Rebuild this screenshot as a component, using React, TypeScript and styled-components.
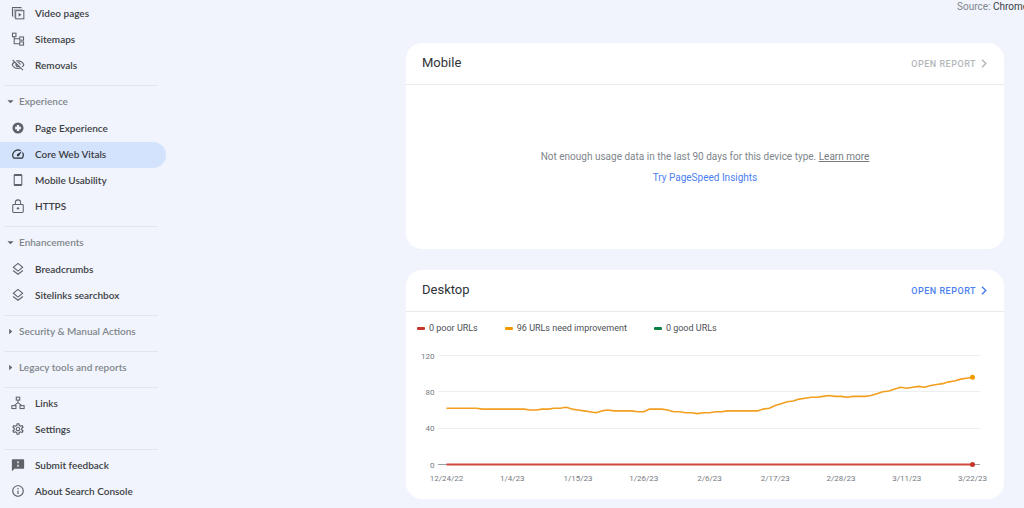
import React from "react";
import styled, { createGlobalStyle } from "styled-components";
import {
  MdOutlineVisibilityOff,
  MdOutlineSpeed,
  MdOutlineSettings,
  MdInfoOutline,
} from "react-icons/md";

const GlobalStyle = createGlobalStyle`
  * { box-sizing: border-box; }
  body {
    margin: 0;
    background: #f1f4fc;
    color: #3c4043;
    font-family: Roboto, "Liberation Sans", sans-serif;
    font-size: 10px;
    overflow-x: hidden;
  }
`;

const Page = styled.div`
  display: flex;
  align-items: flex-start;
`;

const Sidebar = styled.nav`
  flex: 0 0 166px;
  padding-top: 1px;
  font-family: Lato, "Liberation Sans", sans-serif;
  font-weight: 600;
`;

const Section = styled.section`
  padding-bottom: 6px;
`;

const Divider = styled.hr`
  height: 1px;
  margin: 0 8px 3px 4px;
  border: 0;
  background: #e3e5ea;
`;

const NavList = styled.ul<{ $indented?: boolean }>`
  margin: 0;
  padding: ${(p) => (p.$indented ? "1px 0 0" : "0")};
  list-style: none;
`;

const NavLink = styled.a<{ $active?: boolean }>`
  display: flex;
  align-items: center;
  gap: 10px;
  height: 26px;
  padding: 0 0 2px 11px;
  border-radius: 0 13px 13px 0;
  background: ${(p) => (p.$active ? "#d3e2fd" : "transparent")};
  color: #3c4043;
  text-decoration: none;
  white-space: nowrap;

  svg {
    flex: none;
    width: 14px;
    height: 14px;
    color: ${(p) => (p.$active ? "#2b2f33" : "#5f6368")};
  }
`;

const GroupToggle = styled.button`
  display: flex;
  align-items: center;
  gap: 5px;
  width: 100%;
  height: 26px;
  padding: 0 0 2px 7px;
  border: 0;
  background: none;
  color: #80868b;
  font: inherit;
  white-space: nowrap;

  svg {
    width: 7px;
    height: 7px;
    color: #5f6368;
  }
`;

const Main = styled.main`
  flex: 1;
  min-width: 0;
  padding: 0 20px 10px 240px;
`;

const SourceBar = styled.div`
  display: flex;
  justify-content: flex-end;
  margin-right: -20px;
  height: 43px;
`;

const Source = styled.p`
  width: 67px;
  margin: 0;
  overflow: hidden;
  line-height: 14px;
  white-space: nowrap;
  color: #80868b;

  b {
    font-weight: 400;
    color: #3c4043;
  }
`;

const Card = styled.section`
  margin-bottom: 21px;
  border-radius: 16px;
  background: #fff;
  overflow: hidden;

  &:last-child { margin-bottom: 0; }
`;

const CardHeader = styled.header`
  display: flex;
  align-items: center;
  justify-content: space-between;
  height: 42px;
  padding: 0 16px;
  border-bottom: 1px solid #e8eaed;
`;

const CardTitle = styled.h2`
  margin: 0 0 2px;
  font-size: 13px;
  font-weight: 400;
  color: #303336;
`;

const ReportButton = styled.button`
  display: flex;
  align-items: center;
  gap: 5px;
  padding: 0;
  border: 0;
  background: none;
  color: #4d7ff0;
  font: 500 9px Roboto, sans-serif;
  letter-spacing: 0.5px;

  &:disabled { color: #b4b7ba; }

  svg {
    width: 7px;
    height: 9px;
  }
`;

const EmptyState = styled.div`
  display: flex;
  flex-direction: column;
  align-items: center;
  gap: 7px;
  padding: 65px 16px 64px;
  line-height: 14px;
  color: #80868b;

  p { margin: 0; }
  p a { color: #757a7f; }
`;

const InsightsLink = styled.a`
  color: #4d7ff0;
  text-decoration: none;
`;

const Legend = styled.ul`
  display: flex;
  gap: 27px;
  margin: 0;
  padding: 9px 11px 10px;
  list-style: none;
  line-height: 14px;
  color: #4d5156;
  font-size: 9px;
`;

const LegendItem = styled.li<{ $color: string }>`
  display: flex;
  align-items: center;
  gap: 4px;

  &::before {
    content: "";
    width: 8px;
    height: 3px;
    border-radius: 1px;
    background: ${(p) => p.$color};
  }
`;

const ChartSvg = styled.svg`
  display: block;
  width: 100%;
  height: auto;

  text {
    font-family: Roboto, sans-serif;
    font-size: 8px;
    fill: #757a7f;
  }
`;

const VideoPagesIcon = () => (
  <svg viewBox="0 0 24 24" fill="none" stroke="currentColor" strokeWidth="1.8">
    <path d="M2.5 18V2.500H18" />
    <path d="M5.500 20.500V5.500H20" strokeWidth="1" />
    <rect x="8" y="8" width="14" height="14" />
    <path d="M13 11.500v7l5-3.500z" fill="currentColor" stroke="none" />
  </svg>
);

const SitemapIcon = () => (
  <svg viewBox="0 0 24 24" fill="none" stroke="currentColor" strokeWidth="1.8">
    <rect x="2.500" y="2" width="6" height="6" />
    <rect x="15" y="8.500" width="6.500" height="5.500" />
    <rect x="15" y="17" width="6.500" height="5.500" />
    <path d="M5.500 8v12H15M5.500 11.500H15" />
  </svg>
);

const PageExperienceIcon = () => (
  <svg viewBox="0 0 24 24" fill="currentColor">
    <path
      fillRule="evenodd"
      d="M12 2.500a9.500 9.500 0 1 0 0 19 9.500 9.500 0 0 0 0-19zM10 7h4V10h3v4H14v3h-4V14H7v-4h3z"
    />
  </svg>
);

const PhoneIcon = () => (
  <svg viewBox="0 0 24 24" fill="none" stroke="currentColor">
    <rect x="5.500" y="2.500" width="13" height="19" rx="1.500" strokeWidth="1.800" />
    <path d="M5.500 4h13M5.500 20h13" strokeWidth="2" />
  </svg>
);

const LockIcon = () => (
  <svg viewBox="0 0 24 24" fill="none" stroke="currentColor" strokeWidth="1.800">
    <rect x="3" y="9.500" width="18" height="13.500" rx="1.500" />
    <path d="M7.500 9.500V6a4.500 4.500 0 0 1 9 0V9.500" />
    <circle cx="12" cy="16" r="2" fill="currentColor" stroke="none" />
  </svg>
);

const LayersIcon = () => (
  <svg viewBox="0 0 24 24" fill="none" stroke="currentColor" strokeWidth="1.800">
    <path d="M12 2.500l8 6.500-8 6.500L4 9z" />
    <path d="M3.500 14.500L12 21l8.500-6.500" />
  </svg>
);

const LinksIcon = () => (
  <svg viewBox="0 0 24 24" fill="none" stroke="currentColor" strokeWidth="1.800">
    <rect x="9" y="2" width="6" height="5" />
    <rect x="1.500" y="16.500" width="7" height="5" />
    <rect x="15.500" y="16.500" width="7" height="5" />
    <path d="M12 7v5M5.500 16.500L12 11.500l6.500 5" />
  </svg>
);

const FeedbackIcon = () => (
  <svg viewBox="0 0 24 24" fill="currentColor">
    <path
      fillRule="evenodd"
      d="M3 2h18a1.500 1.500 0 0 1 1.500 1.500V17a1.500 1.500 0 0 1-1.500 1.500H6L1.500 22.500V3.500A1.500 1.500 0 0 1 3 2zM10.800 5.500V9h2.400V5.500zM10.800 11.500V15h2.400v-3.500z"
    />
  </svg>
);

const Caret = ({ open }: { open: boolean }) => (
  <svg viewBox="0 0 8 8" fill="currentColor" aria-hidden="true">
    <path d={open ? "M0.500 2.500h7L4 6z" : "M2.500 0.800v6.400L6 4z"} />
  </svg>
);

const Chevron = () => (
  <svg viewBox="0 0 7 9" fill="none" stroke="currentColor" strokeWidth="1.500" aria-hidden="true">
    <path d="M1 0.800L4.800 4.500 1 8.200" />
  </svg>
);

type Item = { label: string; icon: React.ReactNode; active?: boolean };
type Group = { title?: string; items?: Item[] };

const groups: Group[] = [
  {
    items: [
      { label: "Video pages", icon: <VideoPagesIcon /> },
      { label: "Sitemaps", icon: <SitemapIcon /> },
      { label: "Removals", icon: <MdOutlineVisibilityOff /> },
    ],
  },
  {
    title: "Experience",
    items: [
      { label: "Page Experience", icon: <PageExperienceIcon /> },
      { label: "Core Web Vitals", icon: <MdOutlineSpeed />, active: true },
      { label: "Mobile Usability", icon: <PhoneIcon /> },
      { label: "HTTPS", icon: <LockIcon /> },
    ],
  },
  {
    title: "Enhancements",
    items: [
      { label: "Breadcrumbs", icon: <LayersIcon /> },
      { label: "Sitelinks searchbox", icon: <LayersIcon /> },
    ],
  },
  { title: "Security & Manual Actions" },
  { title: "Legacy tools and reports" },
  {
    items: [
      { label: "Links", icon: <LinksIcon /> },
      { label: "Settings", icon: <MdOutlineSettings /> },
    ],
  },
  {
    items: [
      { label: "Submit feedback", icon: <FeedbackIcon /> },
      { label: "About Search Console", icon: <MdInfoOutline /> },
    ],
  },
];

const needImprovement = [
  62, 62, 62, 62, 62, 62, 61, 61, 61, 61, 61, 61, 61, 61, 60, 60, 61, 61, 62, 62,
  63, 61, 60, 59, 58, 57, 59, 60, 59, 59, 59, 59, 58, 58, 61, 61, 61, 60, 58, 58,
  57, 57, 56, 57, 57, 58, 58, 59, 59, 59, 59, 59, 59, 61, 62, 65, 67, 69, 70, 72,
  73, 74, 74, 75, 76, 75, 75, 74, 75, 75, 75, 76, 78, 80, 81, 83, 85, 84, 85, 86,
  85, 87, 88, 89, 91, 92, 94, 95, 96,
];

const dates = [
  "12/24/22", "1/4/23", "1/15/23", "1/26/23", "2/6/23",
  "2/17/23", "2/28/23", "3/11/23", "3/22/23",
];

const xAt = (day: number) => 40.5 + (day * 526) / 88;
const yAt = (value: number) => 119.5 - (value * 109) / 120;

function UrlChart() {
  const last = needImprovement.length - 1;
  const points = needImprovement.map((v, i) => `${xAt(i)},${yAt(v)}`).join(" ");
  return (
    <ChartSvg viewBox="0 0 598 154" role="img" aria-label="URLs by status over time">
      {[120, 80, 40, 0].map((v) => (
        <g key={v}>
          <line
            x1="32"
            x2="574"
            y1={Math.floor(yAt(v)) + 0.5}
            y2={Math.floor(yAt(v)) + 0.5}
            stroke={v === 0 ? "#9aa0a6" : "#eeeff0"}
          />
          <text x="28.500" y={yAt(v) + 3} textAnchor="end">{v}</text>
        </g>
      ))}
      {dates.map((d, i) => (
        <text key={d} x={xAt(i * 11)} y="136" textAnchor="middle">{d}</text>
      ))}
      <line x1={xAt(0)} x2={xAt(last)} y1={yAt(0)} y2={yAt(0)} stroke="#d0493c" strokeWidth="1.800" />
      <circle cx={xAt(last)} cy={yAt(0)} r="2.500" fill="#c5372c" />
      <polyline points={points} fill="none" stroke="#f29f1f" strokeWidth="1.600" strokeLinejoin="round" />
      <circle cx={xAt(last)} cy={yAt(96)} r="2.500" fill="#f29900" />
    </ChartSvg>
  );
}

export default function App() {
  return (
    <>
      <GlobalStyle />
      <Page>
        <Sidebar aria-label="Search Console">
          {groups.map((group, index) => (
            <React.Fragment key={index}>
              {index > 0 && <Divider />}
              <Section>
                {group.title && (
                  <GroupToggle type="button" aria-expanded={!!group.items}>
                    <Caret open={!!group.items} />
                    {group.title}
                  </GroupToggle>
                )}
                {group.items && (
                  <NavList $indented={!!group.title}>
                    {group.items.map((item) => (
                      <li key={item.label}>
                        <NavLink href="#" $active={item.active}>
                          {item.icon}
                          {item.label}
                        </NavLink>
                      </li>
                    ))}
                  </NavList>
                )}
              </Section>
            </React.Fragment>
          ))}
        </Sidebar>
        <Main>
          <SourceBar>
            <Source>Source: <b>Chrome</b></Source>
          </SourceBar>
          <Card>
            <CardHeader>
              <CardTitle>Mobile</CardTitle>
              <ReportButton type="button" disabled>OPEN REPORT <Chevron /></ReportButton>
            </CardHeader>
            <EmptyState>
              <p>
                Not enough usage data in the last 90 days for this device type.{" "}
                <a href="#">Learn more</a>
              </p>
              <InsightsLink href="#">Try PageSpeed Insights</InsightsLink>
            </EmptyState>
          </Card>
          <Card>
            <CardHeader>
              <CardTitle>Desktop</CardTitle>
              <ReportButton type="button">OPEN REPORT <Chevron /></ReportButton>
            </CardHeader>
            <Legend>
              <LegendItem $color="#c5372c">0 poor URLs</LegendItem>
              <LegendItem $color="#f29900">96 URLs need improvement</LegendItem>
              <LegendItem $color="#0d8043">0 good URLs</LegendItem>
            </Legend>
            <UrlChart />
          </Card>
        </Main>
      </Page>
    </>
  );
}
